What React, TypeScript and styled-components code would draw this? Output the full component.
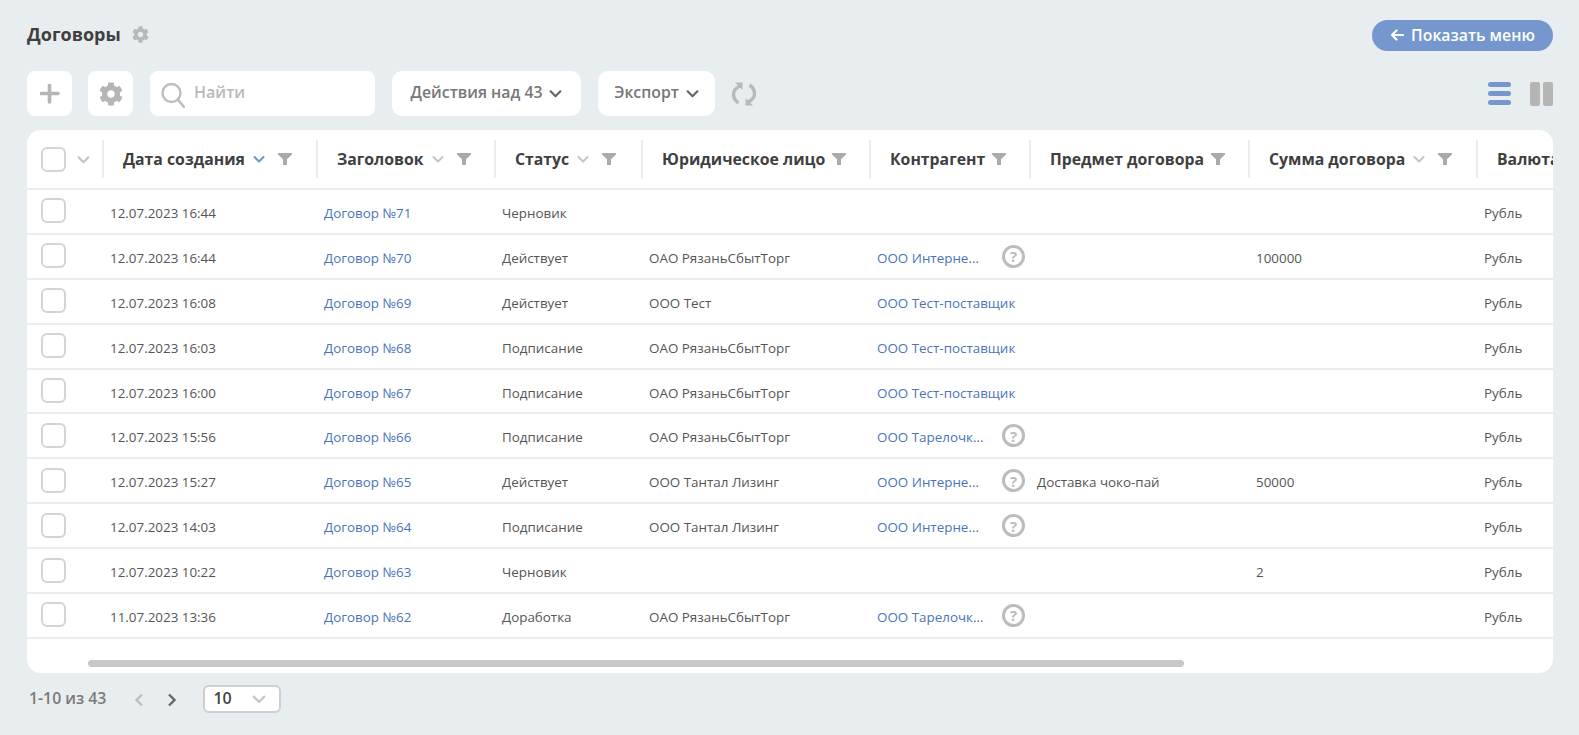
import styled, { createGlobalStyle } from 'styled-components';
import { FaCog } from 'react-icons/fa';

const GlobalStyle = createGlobalStyle`
  html, body {
    margin: 0;
    padding: 0;
    height: 100%;
    overflow: hidden;
    background: #e8edf0;
    font-family: 'Open Sans', 'Noto Sans', sans-serif;
  }
`;

const COLUMNS = '75px 214px 178px 147px 228px 160px 219px 228px 110px';

type Contract = {
  date: string;
  title: string;
  status: string;
  company?: string;
  partner?: string;
  hint?: boolean;
  subject?: string;
  sum?: string;
};

const contracts: Contract[] = [
  { date: '12.07.2023 16:44', title: 'Договор №71', status: 'Черновик' },
  { date: '12.07.2023 16:44', title: 'Договор №70', status: 'Действует', company: 'ОАО РязаньСбытТорг', partner: 'ООО Интерне...', hint: true, sum: '100000' },
  { date: '12.07.2023 16:08', title: 'Договор №69', status: 'Действует', company: 'ООО Тест', partner: 'ООО Тест-поставщик' },
  { date: '12.07.2023 16:03', title: 'Договор №68', status: 'Подписание', company: 'ОАО РязаньСбытТорг', partner: 'ООО Тест-поставщик' },
  { date: '12.07.2023 16:00', title: 'Договор №67', status: 'Подписание', company: 'ОАО РязаньСбытТорг', partner: 'ООО Тест-поставщик' },
  { date: '12.07.2023 15:56', title: 'Договор №66', status: 'Подписание', company: 'ОАО РязаньСбытТорг', partner: 'ООО Тарелочк...', hint: true },
  { date: '12.07.2023 15:27', title: 'Договор №65', status: 'Действует', company: 'ООО Тантал Лизинг', partner: 'ООО Интерне...', hint: true, subject: 'Доставка чоко-пай', sum: '50000' },
  { date: '12.07.2023 14:03', title: 'Договор №64', status: 'Подписание', company: 'ООО Тантал Лизинг', partner: 'ООО Интерне...', hint: true },
  { date: '12.07.2023 10:22', title: 'Договор №63', status: 'Черновик', sum: '2' },
  { date: '11.07.2023 13:36', title: 'Договор №62', status: 'Доработка', company: 'ОАО РязаньСбытТорг', partner: 'ООО Тарелочк...', hint: true },
];

const headers = [
  { label: 'Дата создания', sort: 'active' },
  { label: 'Заголовок', sort: 'idle' },
  { label: 'Статус', sort: 'idle' },
  { label: 'Юридическое лицо' },
  { label: 'Контрагент' },
  { label: 'Предмет договора' },
  { label: 'Сумма договора', sort: 'idle' },
  { label: 'Валюта' },
];

function Chevron({ size = 12, color = '#c4c4c4', width = 2 }: { size?: number; color?: string; width?: number }) {
  return (
    <svg width={size} height={size} viewBox="0 0 12 12" fill="none" style={{ flexShrink: 0 }}>
      <path d="M1.5 4l4.5 4.5L10.5 4" stroke={color} strokeWidth={width} strokeLinecap="round" strokeLinejoin="round" />
    </svg>
  );
}

function Funnel() {
  return (
    <svg width="14" height="12" viewBox="0 0 14 12" style={{ flexShrink: 0 }}>
      <path d="M0 0h14v1.5L9 6.2V12H5V6.2L0 1.5z" fill="#aaaaaa" />
    </svg>
  );
}

function App() {
  return (
    <>
      <GlobalStyle />
      <Page>
        <TopBar>
          <TitleGroup>
            <Title>Договоры</Title>
            <FaCog size={17} color="#b9b9b9" />
          </TitleGroup>
          <MenuButton>
            <svg width="14" height="12" viewBox="0 0 14 12" fill="none">
              <path d="M13 6H2M6.5 1.5L2 6l4.5 4.5" stroke="#fff" strokeWidth="2.2" strokeLinecap="round" strokeLinejoin="round" />
            </svg>
            Показать меню
          </MenuButton>
        </TopBar>

        <Toolbar>
          <IconButton>
            <svg width="20" height="20" viewBox="0.5 0.5 20 20">
              <path d="M10 1.500v17M1.500 10h17" stroke="#b5b5b5" strokeWidth="3.6" strokeLinecap="round" />
            </svg>
          </IconButton>
          <IconButton>
            <FaCog size={24} color="#b5b5b5" />
          </IconButton>
          <SearchBox>
            <svg width="24" height="26" viewBox="0 0 24 26" fill="none">
              <circle cx="10.5" cy="11" r="9" stroke="#bdbdbd" strokeWidth="2.400" />
              <path d="M16.8 17.500L23 25" stroke="#bdbdbd" strokeWidth="2.600" strokeLinecap="round" />
            </svg>
            <SearchText>Найти</SearchText>
          </SearchBox>
          <MenuSelect $width={189}>
            <SelectLabel>Действия над 43</SelectLabel>
            <Chevron size={13} color="#666" />
          </MenuSelect>
          <MenuSelect $width={117}>
            <SelectLabel>Экспорт</SelectLabel>
            <Chevron size={13} color="#666" />
          </MenuSelect>
          <RefreshIcon width="26" height="26" viewBox="0 0 26 26" fill="none">
            <path d="M9 5C4.500 7 2.500 10 2.500 13.500c0 3 1.500 6 5 8.500" stroke="#b9b9b9" strokeWidth="3.400" />
            <path d="M4 1.500h7.500V9z" fill="#b9b9b9" />
            <path d="M17 21c4.500-2 6.500-5 6.500-8.500 0-3-1.500-6-5-8.500" stroke="#b9b9b9" strokeWidth="3.400" />
            <path d="M22 24.500h-7.500V17z" fill="#b9b9b9" />
          </RefreshIcon>
          <ViewSwitch>
            <ListView>
              <i />
              <i />
              <i />
            </ListView>
            <SplitView>
              <i />
              <i />
            </SplitView>
          </ViewSwitch>
        </Toolbar>

        <Panel>
          <TableClip>
            <HeaderRow>
              <SelectCell>
                <Checkbox />
                <Chevron size={13} />
              </SelectCell>
              {headers.map(column => (
                <HeaderCell key={column.label}>
                  <HeaderLabel>{column.label}</HeaderLabel>
                  {column.sort && (
                    <SortMark>
                      <Chevron color={column.sort === 'active' ? '#6f94c9' : '#c4c4c4'} />
                    </SortMark>
                  )}
                  <Funnel />
                </HeaderCell>
              ))}
            </HeaderRow>
            {contracts.map(contract => (
              <Row key={contract.title}>
                <RowSelect>
                  <Checkbox />
                </RowSelect>
                <Cell>{contract.date}</Cell>
                <Cell>
                  <Link>{contract.title}</Link>
                </Cell>
                <Cell>{contract.status}</Cell>
                <Cell>{contract.company}</Cell>
                <Cell>
                  <Link>{contract.partner}</Link>
                  {contract.hint && <Hint>?</Hint>}
                </Cell>
                <Cell>{contract.subject}</Cell>
                <Cell>{contract.sum}</Cell>
                <Cell>Рубль</Cell>
              </Row>
            ))}
          </TableClip>
          <ScrollTrack>
            <ScrollThumb />
          </ScrollTrack>
        </Panel>

        <Footer>
          <Range>1-10 из 43</Range>
          <Pager>
            <svg width="10" height="14" viewBox="0 0 10 14" fill="none">
              <path d="M8 1.500L2.500 7 8 12.500" stroke="#bdbdbd" strokeWidth="2.4" />
            </svg>
            <svg width="10" height="14" viewBox="0 0 10 14" fill="none">
              <path d="M2 1.500L7.500 7 2 12.500" stroke="#666" strokeWidth="2.4" />
            </svg>
          </Pager>
          <PageSize>
            <PageSizeValue>10</PageSizeValue>
            <Chevron size={14} color="#c8c8c8" />
          </PageSize>
        </Footer>
      </Page>
    </>
  );
}

export default App;

const Page = styled.div`
  box-sizing: border-box;
  height: 735px;
  padding: 20px 26px 0 27px;
  color: #555;
`;

const TopBar = styled.div`
  display: flex;
  align-items: center;
  justify-content: space-between;
  height: 31px;
`;

const TitleGroup = styled.div`
  display: flex;
  align-items: center;
  gap: 11px;
  padding-bottom: 3px;
`;

const Title = styled.h1`
  margin: 0;
  font-size: 18px;
  font-weight: 700;
  color: #3f3f3f;
`;

const MenuButton = styled.button`
  display: flex;
  align-items: center;
  justify-content: center;
  gap: 7px;
  width: 181px;
  height: 31px;
  padding: 0 0 2px;
  border: 0;
  border-radius: 16px;
  background: #7597cd;
  color: #fff;
  font-family: inherit;
  font-size: 15.8px;
  font-weight: 600;
`;

const Toolbar = styled.div`
  display: flex;
  align-items: center;
  height: 45px;
  margin-top: 20px;
`;

const IconButton = styled.div`
  display: flex;
  align-items: center;
  justify-content: center;
  width: 45px;
  height: 45px;
  margin-right: 16px;
  border-radius: 8px;
  background: #fff;

  & + & {
    margin-right: 17px;
  }
`;

const SearchBox = styled.div`
  display: flex;
  align-items: center;
  gap: 9px;
  box-sizing: border-box;
  width: 225px;
  height: 45px;
  margin-right: 17px;
  padding: 2px 11px 0;
  border-radius: 8px;
  background: #fff;
`;

const SearchText = styled.span`
  margin-bottom: 6px;
  font-size: 16px;
  font-weight: 600;
  color: #b9b9b9;
`;

const MenuSelect = styled.div<{ $width: number }>`
  display: flex;
  align-items: center;
  justify-content: center;
  gap: 7px;
  width: ${props => props.$width}px;
  height: 45px;
  margin-right: 17px;
  border-radius: 10px;
  background: #fff;
  font-size: 15.8px;
  font-weight: 600;
  color: #777;
`;

const SelectLabel = styled.span`
  margin-bottom: 3px;
`;

const RefreshIcon = styled.svg`
  flex-shrink: 0;
  margin-left: -1px;
`;

const ViewSwitch = styled.div`
  display: flex;
  align-items: center;
  gap: 19px;
  margin-left: auto;
`;

const ListView = styled.div`
  display: flex;
  flex-direction: column;
  gap: 4px;
  width: 23px;

  i {
    display: block;
    height: 5px;
    border-radius: 3px;
    background: #7597cd;
  }
`;

const SplitView = styled.div`
  display: flex;
  gap: 3px;
  width: 23px;
  height: 24px;

  i {
    flex: 1;
    border-radius: 2px;
    background: #b5b5b5;
  }
`;

const Panel = styled.div`
  margin-top: 14px;
  height: 543px;
  border-radius: 14px;
  background: #fff;
  overflow: hidden;
`;

const TableClip = styled.div`
  overflow: hidden;
`;

const HeaderRow = styled.div`
  display: grid;
  grid-template-columns: ${COLUMNS};
  align-items: center;
  box-sizing: border-box;
  width: 1570px;
  height: 60px;
  border-bottom: 2px solid #e8edf0;
`;

const SelectCell = styled.div`
  display: flex;
  align-items: center;
  gap: 11px;
  padding-left: 14px;
`;

const HeaderCell = styled.div`
  display: flex;
  align-items: center;
  box-sizing: border-box;
  height: 38px;
  padding-left: 19px;
  border-left: 2px solid #e8edf0;
  white-space: nowrap;
`;

const HeaderLabel = styled.span`
  margin-right: 7px;
  font-size: 15.8px;
  font-weight: 700;
  color: #3f3f3f;
`;

const SortMark = styled.span`
  display: flex;
  margin: 0 13px 0 1px;
`;

const Row = styled.div`
  display: grid;
  grid-template-columns: ${COLUMNS};
  align-items: center;
  box-sizing: border-box;
  width: 1570px;
  height: 44.9px;
  border-bottom: 2px solid #e8edf0;
`;

const RowSelect = styled.div`
  display: flex;
  margin-top: -1px;
  padding-left: 14px;
`;

const Cell = styled.div`
  display: flex;
  align-items: center;
  min-width: 0;
  padding: 3px 4px 0 8px;
  font-size: 13.4px;
  color: #555;
  white-space: nowrap;
`;

const Link = styled.span`
  color: #4b74b8;
`;

const Hint = styled.span`
  display: flex;
  align-items: center;
  justify-content: center;
  flex-shrink: 0;
  box-sizing: border-box;
  width: 23px;
  height: 23px;
  margin: -3px 0 0 auto;
  border: 3px solid #bcbcbc;
  border-radius: 50%;
  font-size: 15px;
  font-weight: 700;
  color: #bcbcbc;
`;

const Checkbox = styled.span`
  display: block;
  flex-shrink: 0;
  box-sizing: border-box;
  width: 25px;
  height: 25px;
  border: 2.500px solid #d4d4d4;
  border-radius: 6px;
  background: #fff;
`;

const ScrollTrack = styled.div`
  padding: 21px 0 0 61px;
`;

const ScrollThumb = styled.div`
  width: 1096px;
  height: 7px;
  border-radius: 4px;
  background: #c8c8c8;
`;

const Footer = styled.div`
  display: flex;
  align-items: center;
  height: 28px;
  margin-top: 12px;
  padding-left: 2px;
`;

const Range = styled.span`
  margin-bottom: 2px;
  font-size: 15.8px;
  font-weight: 600;
  color: #7a7a7a;
`;

const Pager = styled.div`
  display: flex;
  align-items: center;
  gap: 23px;
  margin: 2px 0 0 28px;
`;

const PageSize = styled.div`
  display: flex;
  align-items: center;
  justify-content: space-between;
  box-sizing: border-box;
  width: 78px;
  height: 28px;
  margin-left: 26px;
  padding: 0 13px 0 8px;
  border: 2px solid #cfcfcf;
  border-radius: 6px;
  background: #fff;
  font-size: 16px;
  font-weight: 600;
  color: #444;
`;

const PageSizeValue = styled.span`
  margin-bottom: 3px;
`;
